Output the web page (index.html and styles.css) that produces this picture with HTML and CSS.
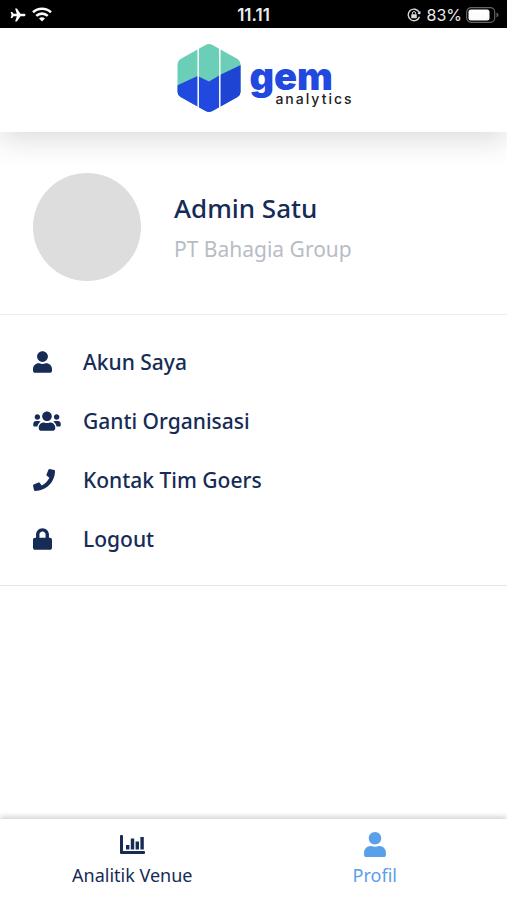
FILE: index.html
```html
<!DOCTYPE html>
<html lang="id">
<head>
<meta charset="utf-8">
<meta name="viewport" content="width=device-width, initial-scale=1">
<title>Profil</title>
<link rel="stylesheet" href="styles.css">
</head>
<body>
<div class="status">
  <div class="status-side">
    <svg width="16" height="14" viewBox="0 0 16 14" aria-hidden="true"><path fill="#fff" d="M15.500 7c0-.8-.8-1.300-1.800-1.300h-3.200L6.900.4H5.100l1.700 5.300H3.600L2.200 4H.7l.8 3-.8 3h1.500l1.400-1.700h3.200L5.100 13.600h1.800l3.600-5.300h3.200c1 0 1.800-.5 1.800-1.300z"/></svg>
    <svg width="20" height="15" viewBox="0 0 20 15" aria-hidden="true"><g fill="none" stroke="#fff" stroke-width="2.600"><path d="M1 5.300a13 13 0 0 1 18 0"/><path d="M4.300 8.900a8.200 8.200 0 0 1 11.400 0"/></g><path fill="#fff" d="M7 11.500a4.500 4.500 0 0 1 6 0L10 14.600z"/></svg>
  </div>
  <time class="clock">11.11</time>
  <div class="status-side status-right">
    <svg width="14" height="14" viewBox="0 0 14 14" aria-hidden="true"><path fill="none" stroke="#ddd" stroke-width="1.400" d="M12.200 4.300A5.800 5.800 0 1 0 12.500 8.800M10.800 5.200l1.900.2.300-1.900"/><rect x="4.200" y="6.200" width="5.600" height="4" rx=".6" fill="#ddd"/><path fill="none" stroke="#ddd" d="M5.400 6.500V5.200a1.600 1.600 0 0 1 3.200 0v1.300"/></svg>
    <span class="charge">83%</span>
    <svg width="33" height="16" viewBox="0 0 33 16" aria-hidden="true"><rect x=".7" y=".7" width="28" height="14.600" rx="4.500" fill="none" stroke="#666" stroke-width="1.200"/><rect x="2.500" y="2.500" width="21" height="11" rx="2.500" fill="#fff"/><path fill="#666" d="M30.500 5.500q2 .8 2 2.500t-2 2.500z"/></svg>
  </div>
</div>
<header class="header">
  <svg width="64" height="70" viewBox="0 0 64 70" aria-hidden="true">
    <defs><clipPath id="hex"><path d="M28.500 2Q32 0 35.500 2L60.500 16Q63.500 18 63.500 21V49Q63.500 52 60.500 54L35.500 68Q32 70 28.500 68L3.500 54Q.5 52 .5 49V21Q.5 18 3.500 16z"/></clipPath></defs>
    <g clip-path="url(#hex)"><path fill="#6bcfb7" d="M0 0h64v70H0z"/><path fill="#2148df" d="M0 42.500L20.500 33 32 38.500 43 32 64 22v48H0z"/><path fill="#1c3fc9" d="M43 32L64 22v48H43z" opacity=".5"/></g>
    <path stroke="#fff" stroke-width="1.500" d="M21.200 0v70M42.800 0v70"/>
  </svg>
  <div class="wordmark"><span class="gem">gem</span><span class="analytics">analytics</span></div>
</header>
<main>
  <section class="profile">
    <div class="avatar"></div>
    <div>
      <h1>Admin Satu</h1>
      <p>PT Bahagia Group</p>
    </div>
  </section>
  <nav class="menu">
    <a href="#akun"><span class="icon"><svg width="19" height="22" viewBox="0 0 448 512" aria-hidden="true"><path d="M224 256c70.700 0 128-57.300 128-128S294.700 0 224 0 96 57.300 96 128s57.300 128 128 128zm89.600 32h-16.700c-22.200 10.200-46.900 16-72.900 16s-50.600-5.800-72.900-16h-16.700C60.200 288 0 348.200 0 422.400V464c0 26.500 21.500 48 48 48h352c26.500 0 48-21.500 48-48v-41.600c0-74.200-60.200-134.400-134.400-134.400z"/></svg></span>Akun Saya</a>
    <a href="#organisasi"><span class="icon"><svg width="28" height="22" viewBox="0 0 640 512" aria-hidden="true"><path d="M96 224c35.300 0 64-28.700 64-64s-28.700-64-64-64-64 28.700-64 64 28.700 64 64 64zm448 0c35.300 0 64-28.700 64-64s-28.700-64-64-64-64 28.700-64 64 28.700 64 64 64zm32 32h-64c-17.600 0-33.500 7.100-45.100 18.600 40.300 22.100 68.900 62 75.100 109.400h66c17.700 0 32-14.300 32-32v-32c0-35.300-28.700-64-64-64zm-256 0c61.900 0 112-50.100 112-112S381.900 32 320 32 208 82.100 208 144s50.100 112 112 112zm76.800 32h-8.300c-20.800 10-43.900 16-68.500 16s-47.600-6-68.500-16h-8.300C179.600 288 128 339.600 128 403.200V432c0 26.500 21.500 48 48 48h288c26.500 0 48-21.500 48-48v-28.800c0-63.600-51.600-115.200-115.200-115.200zm-223.700-13.400C161.500 263.100 145.600 256 128 256H64c-35.300 0-64 28.700-64 64v32c0 17.700 14.300 32 32 32h65.900c6.300-47.400 34.900-87.300 75.200-109.400z"/></svg></span>Ganti Organisasi</a>
    <a href="#kontak"><span class="icon"><svg width="22" height="22" viewBox="0 0 512 512" aria-hidden="true"><path d="M493.400 24.600l-104-24c-11.300-2.600-22.900 3.300-27.500 13.900l-48 112c-4.200 9.800-1.400 21.300 6.900 28l60.600 49.600c-36 76.700-98.900 140.500-177.200 177.200l-49.600-60.600c-6.800-8.300-18.200-11.100-28-6.900l-112 48C3.900 366.500-2 378.100.6 389.400l24 104C27.100 504.200 36.700 512 48 512c256.100 0 464-207.500 464-464 0-11.200-7.700-20.900-18.600-23.400z"/></svg></span>Kontak Tim Goers</a>
    <a href="#logout"><span class="icon"><svg width="19" height="22" viewBox="0 0 448 512" aria-hidden="true"><path d="M400 224h-24v-72C376 68.200 307.800 0 224 0S72 68.200 72 152v72H48c-26.500 0-48 21.500-48 48v192c0 26.500 21.500 48 48 48h352c26.500 0 48-21.500 48-48V272c0-26.500-21.500-48-48-48zm-104 0H152v-72c0-39.700 32.300-72 72-72s72 32.300 72 72v72z"/></svg></span>Logout</a>
  </nav>
</main>
<nav class="tabs">
  <a href="#venue"><svg width="25" height="25" viewBox="0 0 25 25" aria-hidden="true"><path d="M1 3h1q1 0 1 1v15h21q1 0 1 1v1q0 1-1 1H1q-1 0-1-1V4q0-1 1-1zM6 13h3.400v4.500H6zM10.800 6.500h3.400v11h-3.400zM15.600 9.500H19v8h-3.400zM20.400 5h3.400v12.500h-3.400z"/></svg>Analitik Venue</a>
  <a class="active" href="#profil" aria-current="page"><svg width="22" height="25" viewBox="0 0 448 512" aria-hidden="true"><path d="M224 256c70.700 0 128-57.300 128-128S294.700 0 224 0 96 57.300 96 128s57.300 128 128 128zm89.600 32h-16.700c-22.200 10.200-46.900 16-72.900 16s-50.600-5.800-72.900-16h-16.700C60.200 288 0 348.200 0 422.400V464c0 26.500 21.500 48 48 48h352c26.500 0 48-21.500 48-48v-41.600c0-74.200-60.200-134.400-134.400-134.400z"/></svg>Profil</a>
</nav>
</body>
</html>
```
FILE: styles.css
```css
* { box-sizing: border-box; }
body {
  margin: 0;
  min-height: 100vh;
  display: flex;
  flex-direction: column;
  background: #fff;
  color: #162b56;
  font-family: "Noto Sans", sans-serif;
}
a { color: inherit; text-decoration: none; }
svg { display: block; fill: currentColor; flex: none; }
.status {
  display: grid;
  grid-template-columns: 1fr auto 1fr;
  align-items: center;
  height: 28px;
  padding: 1px 8px 0;
  background: #000;
  color: #eee;
  font-family: Inter, sans-serif;
  font-size: 16px;
}
.status-side { display: flex; align-items: center; gap: 6px; padding-left: 2px; }
.status-right { justify-content: flex-end; gap: 4px; }
.charge { padding-left: 2px; }
.clock { font-size: 17px; font-weight: 600; }
.header {
  display: flex;
  justify-content: center;
  align-items: center;
  gap: 8px;
  height: 104px;
  padding: 0 0 4px 24px;
  background: #fff;
  box-shadow: 0 8px 28px rgba(0, 0, 0, .14);
}
.wordmark { display: flex; flex-direction: column; padding-top: 6px; }
.gem {
  color: #2148df;
  font: 900 38px/40px Inter, sans-serif;
}
.analytics {
  margin: -5px 0 0 26px;
  color: #222;
  font: 500 14px/16px Inter, sans-serif;
  letter-spacing: 2px;
}
.profile {
  display: flex;
  align-items: center;
  gap: 33px;
  height: 183px;
  padding: 8px 33px 0;
  border-bottom: 1px solid #e9edf0;
}
.avatar { width: 108px; height: 108px; border-radius: 50%; background: #ddd; }
h1 { margin: 4px 0 0; font-size: 26px; line-height: 40px; font-weight: 500; }
p { margin: 0; color: #b8bcc4; font-size: 21px; line-height: 42px; }
.menu { padding: 17px 33px; border-bottom: 1px solid #dfeaf5; }
.menu a {
  display: flex;
  align-items: center;
  height: 59px;
  font-size: 21px;
  font-weight: 500;
}
.icon { width: 50px; }
.tabs {
  display: grid;
  grid-template-columns: 1fr 1fr;
  height: 81px;
  margin-top: auto;
  padding: 0 11px;
  box-shadow: 0 -2px 6px rgba(0, 0, 0, .2);
}
.tabs a {
  display: flex;
  flex-direction: column;
  align-items: center;
  gap: 6px;
  padding-top: 13px;
  font-size: 18px;
  line-height: 24px;
}
.tabs .active { color: #58a0e8; }
```
